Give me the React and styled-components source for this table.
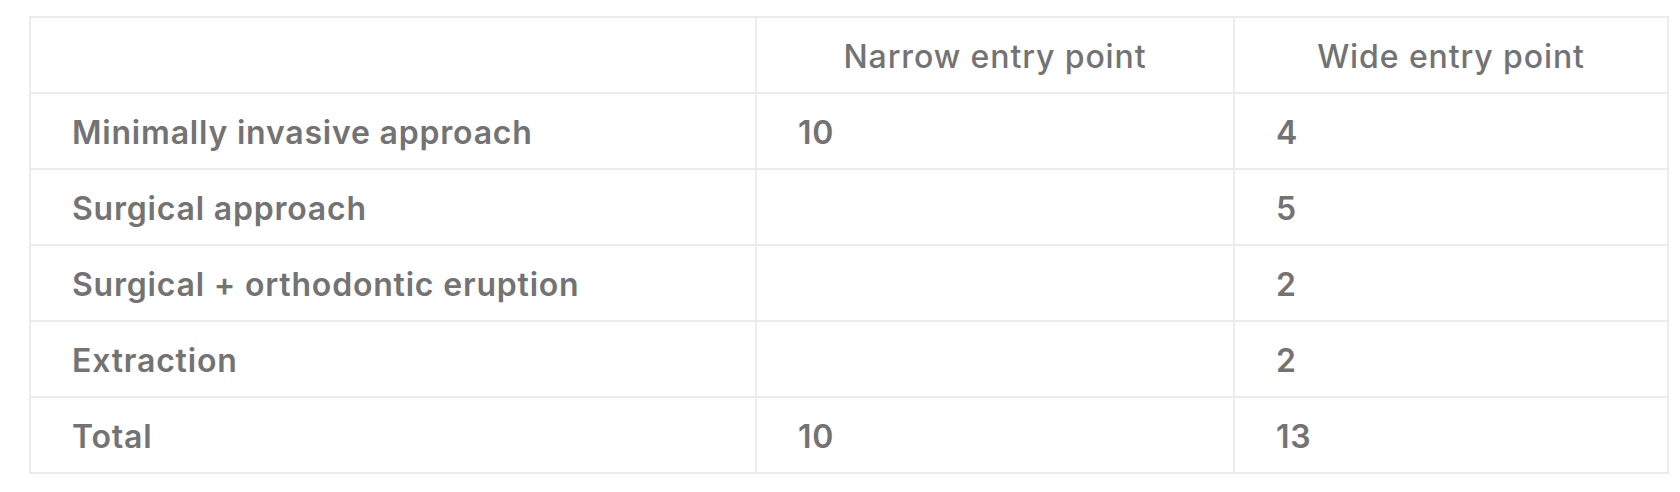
import React from "react";
import styled, { createGlobalStyle } from "styled-components";

const rows = [
  { id: 1, label: "Minimally invasive approach", narrow: "10", wide: "4" },
  { id: 2, label: "Surgical approach", narrow: "", wide: "5" },
  { id: 3, label: "Surgical + orthodontic eruption", narrow: "", wide: "2" },
  { id: 4, label: "Extraction", narrow: "", wide: "2" },
  { id: 5, label: "Total", narrow: "10", wide: "13" },
];

const GlobalStyle = createGlobalStyle`
  body {
    margin: 0;
    background: #ffffff;
    font-family: Inter, "Noto Sans", sans-serif;
  }
`;

const Page = styled.div`
  padding: 16px 13px 0 29px;
`;

const Table = styled.table`
  width: 100%;
  border-collapse: collapse;
  table-layout: fixed;
  border: 2px solid #ebebeb;
  color: #737373;
`;

const Col = styled.col`
  width: ${(props) => props.width}px;
`;

const Row = styled.tr`
  height: 76px;
`;

const HeadCell = styled.th`
  border: 2px solid #ebebeb;
  padding: 2px 12px 0;
  font-size: 32px;
  font-weight: 500;
  letter-spacing: 0.9px;
  text-align: center;
  vertical-align: middle;
  white-space: nowrap;
`;

const Cell = styled.td`
  border: 2px solid #ebebeb;
  padding: 2px 12px 0 41px;
  font-size: 32px;
  font-weight: 600;
  letter-spacing: 0.8px;
  text-align: left;
  vertical-align: middle;
  white-space: nowrap;
`;

export default function App() {
  return (
    <>
      <GlobalStyle />
      <Page>
        <Table>
          <colgroup>
            <Col width={726} />
            <Col width={478} />
            <Col width={434} />
          </colgroup>
          <thead>
            <Row>
              <HeadCell />
              <HeadCell>Narrow entry point</HeadCell>
              <HeadCell>Wide entry point</HeadCell>
            </Row>
          </thead>
          <tbody>
            {rows.map((row) => (
              <Row key={row.id}>
                <Cell>{row.label}</Cell>
                <Cell>{row.narrow}</Cell>
                <Cell>{row.wide}</Cell>
              </Row>
            ))}
          </tbody>
        </Table>
      </Page>
    </>
  );
}
